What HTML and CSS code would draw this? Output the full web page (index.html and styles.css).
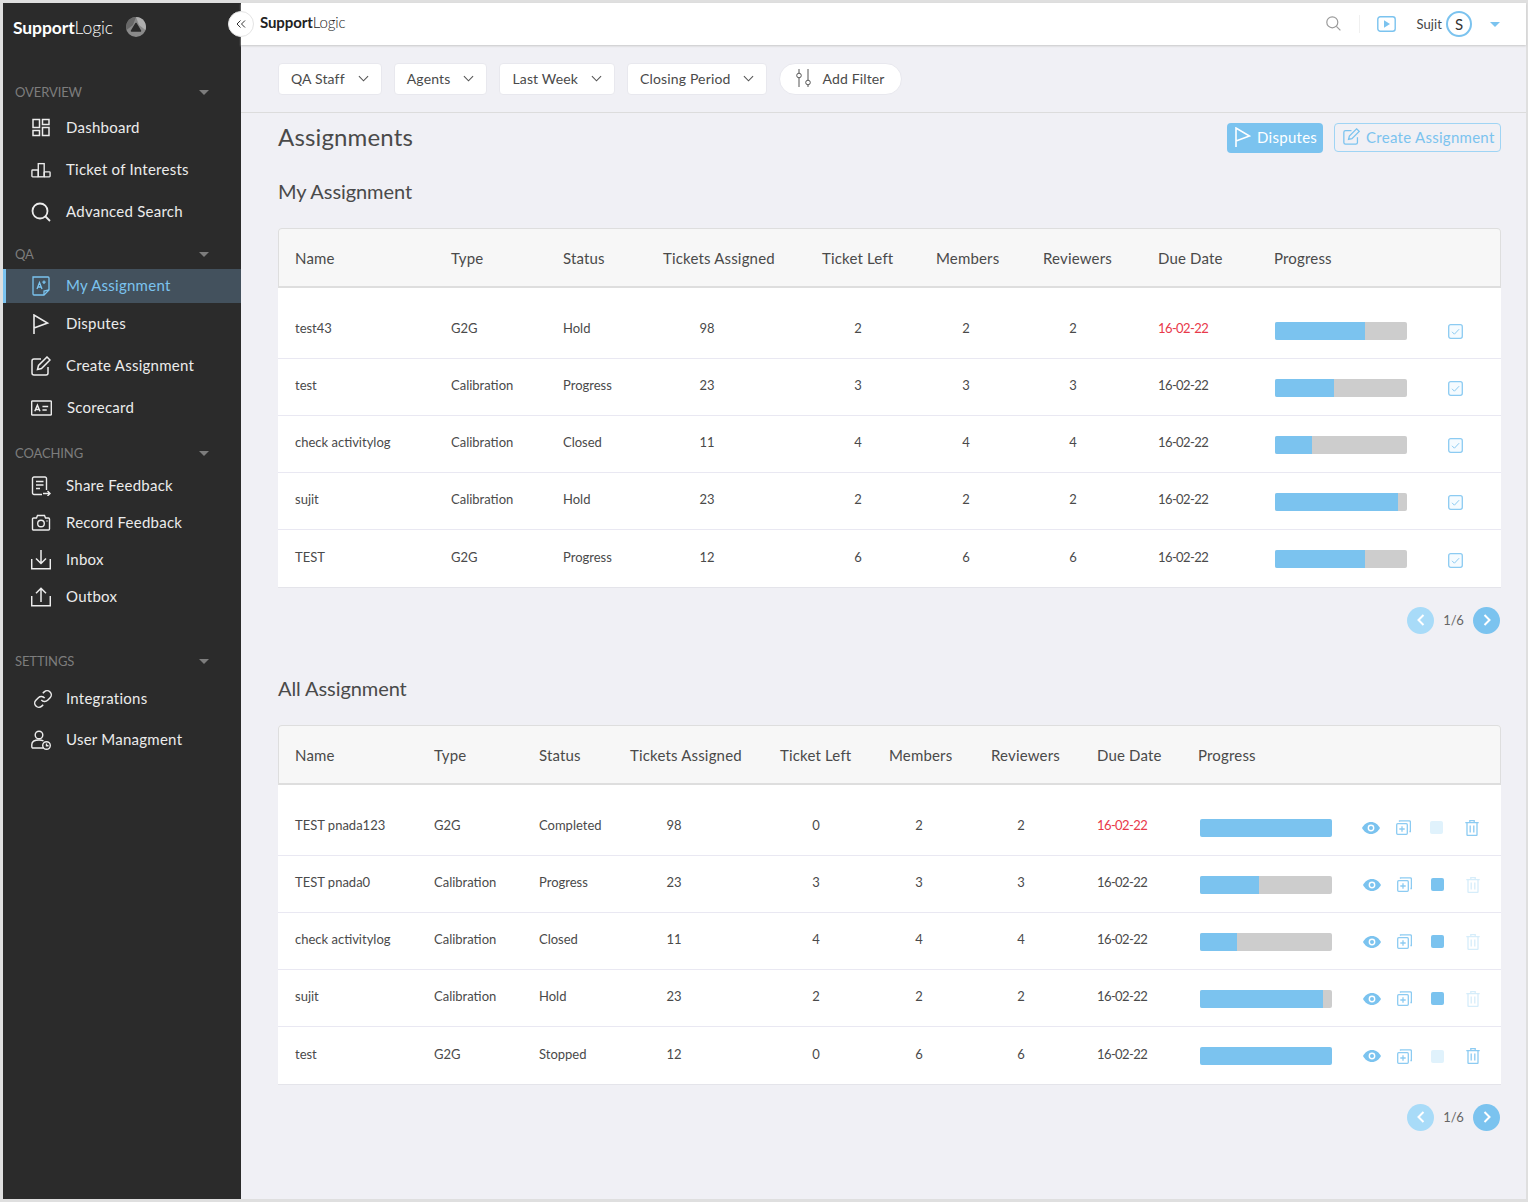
FILE: index.html
```html
<!DOCTYPE html>
<html lang="en">
<head>
<meta charset="utf-8">
<title>SupportLogic Assignments</title>
<link rel="stylesheet" href="styles.css">
</head>
<body>
<svg class="defs" width="0" height="0" aria-hidden="true">
  <symbol id="i-eye" viewBox="0 0 18 12"><path fill="currentColor" fill-rule="evenodd" d="M9 0c4 0 7.2 2.6 9 6-1.800 3.400-5 6-9 6S1.800 9.400 0 6c1.800-3.400 5-6 9-6zm0 2.600a3.400 3.400 0 1 0 0 6.800 3.400 3.400 0 0 0 0-6.800zm0 1.400a2 2 0 1 1 0 4 2 2 0 0 1 0-4z"/></symbol>
  <symbol id="i-copy" viewBox="0 0 15 15"><g fill="none" stroke="currentColor" stroke-width="1.300"><rect x="0.700" y="3.700" width="10.600" height="10.600" rx="1"/><path d="M3.500 1.800V.9h9.900a1 1 0 0 1 1 1v9.600h-1"/><path d="M6 6.300v5.400M3.300 9h5.400"/></g></symbol>
  <symbol id="i-trash" viewBox="0 0 14 16"><g fill="none" stroke="currentColor" stroke-width="1.300"><path d="M.3 2.700h13.400M2 2.700v12.100a.7.7 0 0 0 .7.700h8.600a.7.7 0 0 0 .7-.7V2.700M4.800 2.500V.7h4.400v1.800M5.200 5.500v7M8.800 5.500v7"/></g></symbol>
  <symbol id="i-check" viewBox="0 0 15 15"><rect x="0.700" y="0.700" width="13.600" height="13.600" rx="2" fill="#f5fbff" stroke="#8ccbf2" stroke-width="1.300"/><path d="M4 7.800l2.400 2.400 4.700-5" fill="none" stroke="#8ccbf2" stroke-width="1"/></symbol>
  <symbol id="i-flag" viewBox="0 0 16 20"><path d="M1 20V1l13.500 8L1 14" fill="none" stroke="currentColor" stroke-width="1.600"/></symbol>
  <symbol id="i-edit" viewBox="0 0 20 20"><g fill="none" stroke="currentColor" stroke-width="1.500"><path d="M10 3H3a2 2 0 0 0-2 2v12a2 2 0 0 0 2 2h12a2 2 0 0 0 2-2v-6"/><path d="M6.500 13.500l1-4L16 1l3 3-8.500 8.500z"/></g></symbol>
  <symbol id="i-chev" viewBox="0 0 12 7"><path d="M1 1l5 5 5-5" fill="none" stroke="currentColor" stroke-width="1.200"/></symbol>
</svg>

<div class="app">
  <aside class="sidebar">
    <div class="brand">
      <span class="wordmark wordmark-light"><b>Support</b>Logic</span>
      <svg class="brand-mark" width="20" height="20" viewBox="0 0 20 20"><circle cx="10" cy="10" r="10" fill="#8a8a8a"/><path d="M10 0a10 10 0 0 1 9.500 13L13 8z" fill="#b0b0b0"/><path d="M.5 13A10 10 0 0 1 10 0L7 8z" fill="#686868"/><path d="M10 6.500l4.500 7.500h-9z" fill="#2b2b2b" stroke="#2b2b2b" stroke-linejoin="round" stroke-width="1.500"/></svg>
    </div>

    <div class="nav-label nav-label-first"><span>OVERVIEW</span><i class="caret"></i></div>
    <ul class="nav nav-overview">
      <li class="nav-item"><svg class="nav-icon" viewBox="0 0 20 20"><g fill="none" stroke="currentColor" stroke-width="1.500"><rect x="2" y="1.500" width="6.500" height="8"/><rect x="11.500" y="1.500" width="6.500" height="5"/><rect x="2" y="12.500" width="6.500" height="5"/><rect x="11.500" y="9.500" width="6.500" height="8"/></g></svg>Dashboard</li>
      <li class="nav-item"><svg class="nav-icon" viewBox="0 0 22 20"><g fill="none" stroke="currentColor" stroke-width="1.500"><rect x="1" y="10" width="7" height="7.500" rx=".8"/><rect x="8" y="3" width="6.500" height="14.500"/><rect x="14.500" y="12" width="6.500" height="5.500" rx=".8"/></g></svg>Ticket of Interests</li>
      <li class="nav-item"><svg class="nav-icon" viewBox="0 0 20 20"><g fill="none" stroke="currentColor" stroke-width="1.800"><circle cx="9" cy="9" r="7.500"/><path d="M14 14l5 5"/></g></svg>Advanced Search</li>
    </ul>

    <div class="nav-label nav-label-qa"><span>QA</span><i class="caret"></i></div>
    <ul class="nav nav-qa">
      <li class="nav-item nav-item-active"><svg class="nav-icon" viewBox="0 0 20 20"><g fill="none" stroke="currentColor" stroke-width="1.300"><path d="M2 1h15a1 1 0 0 1 1 1v12l-5 5H3a1 1 0 0 1-1-1z"/><path d="M18 14l-5 1v4"/><path d="M6 13l2.500-6.500L11 13M6.800 11h3.400M13 4.500v3.500M11.300 6.200h3.400"/></g></svg>My Assignment</li>
      <li class="nav-item"><svg class="nav-icon" viewBox="0 0 20 20"><use href="#i-flag"/></svg>Disputes</li>
      <li class="nav-item"><svg class="nav-icon" viewBox="0 0 20 20"><use href="#i-edit"/></svg>Create Assignment</li>
      <li class="nav-item"><svg class="nav-icon nav-icon-wide" viewBox="0 0 22 16"><g fill="none" stroke="currentColor" stroke-width="1.500"><rect x=".7" y=".7" width="20.600" height="14.600" rx=".8"/><path d="M4 11.500L6.700 5l2.700 6.500M4.900 9.500h3.700M12 6.500h6M12 10h4.500"/></g></svg>Scorecard</li>
    </ul>

    <div class="nav-label nav-label-coaching"><span>COACHING</span><i class="caret"></i></div>
    <ul class="nav nav-coaching">
      <li class="nav-item"><svg class="nav-icon" viewBox="0 0 20 20"><g fill="none" stroke="currentColor" stroke-width="1.400"><path d="M11 18.500H3a1.500 1.500 0 0 1-1.500-1.500V2.500A1.500 1.500 0 0 1 3 1h11a1.500 1.500 0 0 1 1.500 1.500V14"/><path d="M5 5.500h7.500M5 9h7.500M5 12.500h4M12 17.500h7M16.500 15l2.500 2.500-2.500 2.500"/></g></svg>Share Feedback</li>
      <li class="nav-item"><svg class="nav-icon" viewBox="0 0 20 20"><g fill="none" stroke="currentColor" stroke-width="1.400"><path d="M2.500 5h3l1-2.500h7l1 2.500h3a1 1 0 0 1 1 1v10a1 1 0 0 1-1 1h-15a1 1 0 0 1-1-1V6a1 1 0 0 1 1-1z"/><circle cx="10" cy="10.500" r="3.300"/><path d="M15.500 8h1"/></g></svg>Record Feedback</li>
      <li class="nav-item"><svg class="nav-icon" viewBox="0 0 20 20"><g fill="none" stroke="currentColor" stroke-width="1.500"><path d="M.7 9v9.800h18.600V9M10 0v13.500M5 8.500l5 5 5-5"/></g></svg>Inbox</li>
      <li class="nav-item"><svg class="nav-icon" viewBox="0 0 20 20"><g fill="none" stroke="currentColor" stroke-width="1.500"><path d="M.7 9v9.800h18.600V9M10 15V1.200M5 6.200l5-5 5 5"/></g></svg>Outbox</li>
    </ul>

    <div class="nav-label nav-label-settings"><span>SETTINGS</span><i class="caret"></i></div>
    <ul class="nav nav-settings">
      <li class="nav-item"><svg class="nav-icon nav-icon-link" viewBox="0 0 24 24"><g fill="none" stroke="currentColor" stroke-width="1.800"><path d="M10 13a5 5 0 0 0 7.540.54l3-3a5 5 0 0 0-7.070-7.070l-1.720 1.710"/><path d="M14 11a5 5 0 0 0-7.540-.54l-3 3a5 5 0 0 0 7.070 7.070l1.710-1.710"/></g></svg>Integrations</li>
      <li class="nav-item"><svg class="nav-icon" viewBox="0 0 20 20"><g fill="none" stroke="currentColor" stroke-width="1.400"><circle cx="8" cy="5" r="3.800"/><path d="M12.500 18H2a1.200 1.200 0 0 1-1.200-1.200v-2.300C.8 11.800 3.500 10 8 10c1.800 0 3.300.3 4.500.8"/><circle cx="15.500" cy="15.500" r="3.800"/><path d="M15.500 13.500v2.200h2"/></g></svg>User Managment</li>
    </ul>
  </aside>

  <button class="collapse" type="button" aria-label="Collapse"><svg width="10" height="8" viewBox="0 0 10 8"><path d="M4.500.5L1 4l3.500 3.500M9 .5L5.500 4 9 7.500" fill="none" stroke="#333" stroke-width="1"/></svg></button>

  <main class="main">
    <header class="topbar">
      <span class="wordmark wordmark-dark"><b>Support</b>Logic</span>
      <div class="top-actions">
        <svg class="top-search" width="15" height="15" viewBox="0 0 15 15"><g fill="none" stroke="#9a9a9a" stroke-width="1.200"><circle cx="6.300" cy="6.300" r="5.500"/><path d="M10.400 10.400l4 4"/></g></svg>
        <span class="top-div"></span>
        <svg class="top-play" width="19" height="16" viewBox="0 0 19 16"><rect x=".8" y=".8" width="17.400" height="14.400" rx="2.500" fill="none" stroke="#7bc3ef" stroke-width="1.400"/><path d="M7 4.300v7.400l6-3.700z" fill="#7bc3ef"/></svg>
        <span class="top-user">Sujit</span>
        <span class="avatar">S</span>
        <i class="caret caret-blue"></i>
      </div>
    </header>

    <div class="filters">
      <div class="chip">QA Staff<svg class="chev" width="11" height="7"><use href="#i-chev"/></svg></div>
      <div class="chip">Agents<svg class="chev" width="11" height="7"><use href="#i-chev"/></svg></div>
      <div class="chip">Last Week<svg class="chev" width="11" height="7"><use href="#i-chev"/></svg></div>
      <div class="chip">Closing Period<svg class="chev" width="11" height="7"><use href="#i-chev"/></svg></div>
      <div class="chip chip-pill"><svg class="sliders" width="16" height="20" viewBox="0 0 16 20"><g fill="none" stroke="#555" stroke-width="1"><path d="M3 1v4M3 10v9M12 1v11M12 17v2"/><circle cx="3" cy="7.500" r="2.300"/><circle cx="12" cy="14.500" r="2.300"/></g></svg>Add Filter</div>
    </div>

    <div class="content">
      <div class="title-row">
        <h1 class="page-title">Assignments</h1>
        <div class="title-actions">
          <button class="btn btn-solid" type="button"><svg class="btn-icon" width="16" height="20"><use href="#i-flag"/></svg>Disputes</button>
          <button class="btn btn-outline" type="button"><svg class="btn-icon" width="17" height="17" viewBox="0 0 20 20"><use href="#i-edit"/></svg>Create Assignment</button>
        </div>
      </div>

      <h2 class="section-title section-first">My Assignment</h2>
      <div class="table t-my">
        <div class="row row-head"><span>Name</span><span>Type</span><span>Status</span><span>Tickets Assigned</span><span>Ticket Left</span><span>Members</span><span>Reviewers</span><span>Due Date</span><span>Progress</span></div>

        <div class="row row-first"><span>test43</span><span>G2G</span><span>Hold</span><span class="num">98</span><span class="num num-s">2</span><span class="num num-t">2</span><span class="num num-t">2</span><span class="date due-late">16-02-22</span>
          <div class="prog"><div class="bar"><div class="fill" style="width:68.500%"></div></div><svg class="check" width="15" height="15"><use href="#i-check"/></svg></div></div>
        <div class="row"><span>test</span><span>Calibration</span><span>Progress</span><span class="num">23</span><span class="num num-s">3</span><span class="num num-t">3</span><span class="num num-t">3</span><span class="date">16-02-22</span>
          <div class="prog"><div class="bar"><div class="fill" style="width:45%"></div></div><svg class="check" width="15" height="15"><use href="#i-check"/></svg></div></div>
        <div class="row"><span>check activitylog</span><span>Calibration</span><span>Closed</span><span class="num">11</span><span class="num num-s">4</span><span class="num num-t">4</span><span class="num num-t">4</span><span class="date">16-02-22</span>
          <div class="prog"><div class="bar"><div class="fill" style="width:28%"></div></div><svg class="check" width="15" height="15"><use href="#i-check"/></svg></div></div>
        <div class="row"><span>sujit</span><span>Calibration</span><span>Hold</span><span class="num">23</span><span class="num num-s">2</span><span class="num num-t">2</span><span class="num num-t">2</span><span class="date">16-02-22</span>
          <div class="prog"><div class="bar"><div class="fill" style="width:93%"></div></div><svg class="check" width="15" height="15"><use href="#i-check"/></svg></div></div>
        <div class="row"><span>TEST</span><span>G2G</span><span>Progress</span><span class="num">12</span><span class="num num-s">6</span><span class="num num-t">6</span><span class="num num-t">6</span><span class="date">16-02-22</span>
          <div class="prog"><div class="bar"><div class="fill" style="width:68%"></div></div><svg class="check" width="15" height="15"><use href="#i-check"/></svg></div></div>
      </div>
      <div class="pager"><span class="pg pg-prev"><svg width="8" height="12" viewBox="0 0 8 12"><path d="M6.500 1L1.500 6l5 5" fill="none" stroke="#fff" stroke-width="2"/></svg></span><span class="pg-text">1/6</span><span class="pg pg-next"><svg width="8" height="12" viewBox="0 0 8 12"><path d="M1.500 1l5 5-5 5" fill="none" stroke="#fff" stroke-width="2"/></svg></span></div>

      <h2 class="section-title section-second">All Assignment</h2>
      <div class="table t-all">
        <div class="row row-head"><span>Name</span><span>Type</span><span>Status</span><span>Tickets Assigned</span><span>Ticket Left</span><span>Members</span><span>Reviewers</span><span>Due Date</span><span>Progress</span></div>

        <div class="row row-first"><span>TEST pnada123</span><span>G2G</span><span>Completed</span><span class="num">98</span><span class="num num-s">0</span><span class="num num-t">2</span><span class="num num-t">2</span><span class="date due-late">16-02-22</span>
          <div class="prog"><div class="bar"><div class="fill" style="width:100%"></div></div>
            <div class="acts acts-first"><svg class="a-eye" width="18" height="12"><use href="#i-eye"/></svg><svg class="a-copy" width="15" height="15"><use href="#i-copy"/></svg><span class="sq sq-off"></span><svg class="a-trash" width="14" height="16"><use href="#i-trash"/></svg></div></div></div>
        <div class="row"><span>TEST pnada0</span><span>Calibration</span><span>Progress</span><span class="num">23</span><span class="num num-s">3</span><span class="num num-t">3</span><span class="num num-t">3</span><span class="date">16-02-22</span>
          <div class="prog"><div class="bar"><div class="fill" style="width:45%"></div></div>
            <div class="acts"><svg class="a-eye" width="18" height="12"><use href="#i-eye"/></svg><svg class="a-copy" width="15" height="15"><use href="#i-copy"/></svg><span class="sq"></span><svg class="a-trash a-off" width="14" height="16"><use href="#i-trash"/></svg></div></div></div>
        <div class="row"><span>check activitylog</span><span>Calibration</span><span>Closed</span><span class="num">11</span><span class="num num-s">4</span><span class="num num-t">4</span><span class="num num-t">4</span><span class="date">16-02-22</span>
          <div class="prog"><div class="bar"><div class="fill" style="width:28%"></div></div>
            <div class="acts"><svg class="a-eye" width="18" height="12"><use href="#i-eye"/></svg><svg class="a-copy" width="15" height="15"><use href="#i-copy"/></svg><span class="sq"></span><svg class="a-trash a-off" width="14" height="16"><use href="#i-trash"/></svg></div></div></div>
        <div class="row"><span>sujit</span><span>Calibration</span><span>Hold</span><span class="num">23</span><span class="num num-s">2</span><span class="num num-t">2</span><span class="num num-t">2</span><span class="date">16-02-22</span>
          <div class="prog"><div class="bar"><div class="fill" style="width:93%"></div></div>
            <div class="acts"><svg class="a-eye" width="18" height="12"><use href="#i-eye"/></svg><svg class="a-copy" width="15" height="15"><use href="#i-copy"/></svg><span class="sq"></span><svg class="a-trash a-off" width="14" height="16"><use href="#i-trash"/></svg></div></div></div>
        <div class="row"><span>test</span><span>G2G</span><span>Stopped</span><span class="num">12</span><span class="num num-s">0</span><span class="num num-t">6</span><span class="num num-t">6</span><span class="date">16-02-22</span>
          <div class="prog"><div class="bar"><div class="fill" style="width:100%"></div></div>
            <div class="acts"><svg class="a-eye" width="18" height="12"><use href="#i-eye"/></svg><svg class="a-copy" width="15" height="15"><use href="#i-copy"/></svg><span class="sq sq-off"></span><svg class="a-trash" width="14" height="16"><use href="#i-trash"/></svg></div></div></div>
      </div>
      <div class="pager"><span class="pg pg-prev"><svg width="8" height="12" viewBox="0 0 8 12"><path d="M6.500 1L1.500 6l5 5" fill="none" stroke="#fff" stroke-width="2"/></svg></span><span class="pg-text">1/6</span><span class="pg pg-next"><svg width="8" height="12" viewBox="0 0 8 12"><path d="M1.500 1l5 5-5 5" fill="none" stroke="#fff" stroke-width="2"/></svg></span></div>
    </div>
  </main>
</div>
</body>
</html>
```

FILE: styles.css
```css
* { box-sizing: border-box; }
html, body { margin: 0; padding: 0; }
body {
  width: 1528px;
  height: 1202px;
  overflow: hidden;
  padding: 3px 2px 3px 3px;
  background: #dfdfdf;
  font-family: Lato, "Open Sans", sans-serif;
  color: #4a4a4a;
}
.defs { position: absolute; }
.app { position: relative; display: flex; height: 1196px; background: #f0f0f5; }

/* sidebar */
.sidebar { width: 238px; flex: none; background: #2b2b2b; color: #ececec; }
.brand { height: 48px; padding: 0 0 0 10px; display: flex; align-items: center; gap: 13px; }
.wordmark { font-weight: 300; white-space: nowrap; }
.wordmark b { font-weight: 700; }
.wordmark-light { color: #fff; width: 100px; font-size: 17.500px; letter-spacing: -.1px; }
.wordmark-dark { color: #222; font-size: 15px; letter-spacing: -.1px; }
.brand-mark { flex: none; }

.nav-label {
  height: 24px; padding: 0 32px 0 12px;
  display: flex; align-items: center; justify-content: space-between;
  font-size: 13px; letter-spacing: -.1px; color: #7d7d7d;
}
.nav-label-first { margin-top: 29px; }
.nav-label-qa { margin-top: 9px; }
.nav-label-coaching { margin-top: 12px; }
.nav-label-settings { margin-top: 34px; }
.caret { width: 0; height: 0; border: 5px solid transparent; border-top: 5px solid #7d7d7d; border-bottom: 0; display: block; }
.caret-blue { border-top-color: #7bc3ef; }

.nav { list-style: none; margin: 0; padding: 0; display: grid; }
.nav-overview { margin-top: 3px; grid-auto-rows: 42px; }
.nav-qa { margin-top: 3px; grid-template-rows: 34px; grid-auto-rows: 42px; }
.nav-coaching { margin-top: 2px; grid-auto-rows: 37px; }
.nav-settings { margin-top: 5px; grid-auto-rows: 41px; }
.nav-item {
  display: flex; align-items: center; gap: 15px; padding: 0 0 2px 28px;
  font-size: 15px; letter-spacing: .25px; white-space: nowrap;
}
.nav-icon { width: 20px; height: 20px; flex: none; margin-top: 2px; }
.nav-icon-wide { width: 21px; height: 16px; }
.nav-icon-link { position: relative; left: 2px; }
.nav-item-active { background: #43515d; color: #7bc3ef; box-shadow: inset 3px 0 0 #7bc3ef; }

.collapse {
  position: absolute; left: 225px; top: 8px; z-index: 2;
  width: 26px; height: 26px; padding: 0; border: 1px solid #e4e4e4; border-radius: 50%;
  background: #fff; display: flex; align-items: center; justify-content: center;
}

/* main */
.main { flex: 1; min-width: 0; }
.topbar {
  height: 42px; background: #fff; padding: 0 26px 0 19px;
  display: flex; align-items: center; justify-content: space-between;
  box-shadow: 0 1px 2px #c8c8c8;
  position: relative;
}
.topbar .wordmark { position: relative; top: -2px; }
.top-actions { display: flex; align-items: center; }
.top-div { width: 1px; height: 18px; background: #f0f0f0; margin: 0 17px 0 18px; }
.top-search { position: relative; top: -1px; }
.top-user { font-size: 13px; color: #444; margin-left: 20px; letter-spacing: .1px; }
.avatar {
  width: 26px; height: 26px; margin-left: 4px; border: 2px solid #7bc3ef; border-radius: 50%;
  display: flex; align-items: center; justify-content: center; font-size: 15px; color: #333;
}
.top-actions .caret-blue { margin-left: 18px; }

.filters {
  height: 68px; padding: 18px 0 0 37px; display: flex; gap: 12px;
  border-bottom: 1px solid #dcdcdc; align-items: flex-start;
}
.chip {
  height: 32px; padding: 0 12px 2px 12px; background: #fff; border: 1px solid #e8e8ee; border-radius: 4px;
  display: flex; align-items: center; gap: 13px; font-size: 14px; letter-spacing: .15px; color: #4a4a4a; white-space: nowrap;
}
.chev { color: #555; flex: none; }
.chip-pill { border-radius: 16px; padding: 0 16px 2px; gap: 10px; }
.sliders { flex: none; }

.content { padding: 10px 25px 0 37px; }
.title-row { display: flex; justify-content: space-between; align-items: flex-start; height: 30px; }
.page-title { margin: 0; font-size: 24px; line-height: 28px; font-weight: 400; color: #4a4a4a; letter-spacing: .15px; }
.title-actions { display: flex; gap: 11px; }
.btn {
  height: 30px; border-radius: 4px; font: inherit; font-size: 15px; letter-spacing: .28px;
  display: flex; align-items: center; gap: 6px; white-space: nowrap; padding: 0 0 2px 8px;
}
.btn-icon { flex: none; }
.btn-solid { width: 96px; background: #7bc3ef; border: 0; color: #fff; }
.btn-outline { width: 167px; height: 29px; background: transparent; border: 1px solid #9fd4f4; color: #7bc3ef; }

.section-title { margin: 0; font-size: 20px; line-height: 28px; font-weight: 400; color: #4a4a4a; letter-spacing: -.08px; }
.section-first { margin-top: 24px; }
.section-second { margin-top: 41px; }

.table { margin-top: 23px; background: #fff; border-radius: 4px 4px 0 0; }
.row {
  display: grid; height: 57px; padding: 0 0 4px 17px; align-items: center;
  border-bottom: 1px solid #e9e8f2; font-size: 13px; letter-spacing: 0; color: #4a4a4a;
}
.t-my .row { grid-template-columns: 156px 112px 100px 159px 114px 107px 115px 116px 1fr; }
.t-all .row { grid-template-columns: 139px 105px 91px 150px 109px 102px 106px 101px 1fr; }
.row-head {
  height: 60px; padding-bottom: 0; background: #f7f7f7; font-size: 15px; letter-spacing: .17px;
  border: 1px solid #dedede; border-bottom-width: 2px; border-radius: 4px 4px 0 0; padding-left: 16px;
  white-space: nowrap;
}
.row-first { height: 71px; padding-top: 14px; }
.row:last-child { height: 58px; border-bottom-color: #e4e4ea; }
.num { width: 88px; text-align: center; }
.num-s { width: 72px; }
.num-t { width: 60px; }
.date { letter-spacing: -.6px; }
.due-late { color: #e8394a; }
.prog { display: flex; align-items: center; margin-top: 5px; padding-left: 1px; }
.t-all .prog { padding-left: 2px; }
.bar { width: 132px; height: 18px; flex: none; background: #cdcdcd; border-radius: 2px; overflow: hidden; }
.fill { height: 100%; background: #7bc3ef; }
.check { margin-left: 41px; flex: none; margin-top: 2px; }
.acts { display: flex; align-items: center; margin-left: 31px; color: #7bc3ef; }
.acts-first { margin-left: 30px; }
.a-copy { margin-left: 16px; color: #8ccbf2; }
.sq { width: 13px; height: 13px; margin-left: 19px; background: #7bc3ef; border-radius: 2px; }
.sq-off { background: #e0f2fc; }
.a-trash { margin-left: 22px; color: #8ccbf2; }
.a-off { color: #d6edfa; }

.pager { margin-top: 19px; padding-right: 1px; height: 26px; display: flex; justify-content: flex-end; align-items: center; }
.pg { width: 27px; height: 27px; border-radius: 50%; display: flex; align-items: center; justify-content: center; flex: none; }
.pg-prev { background: #a8dbf8; }
.pg-next { background: #7bc3ef; }
.pg-text { font-size: 13px; color: #666; width: 39px; text-align: center; letter-spacing: -.2px; }
```
